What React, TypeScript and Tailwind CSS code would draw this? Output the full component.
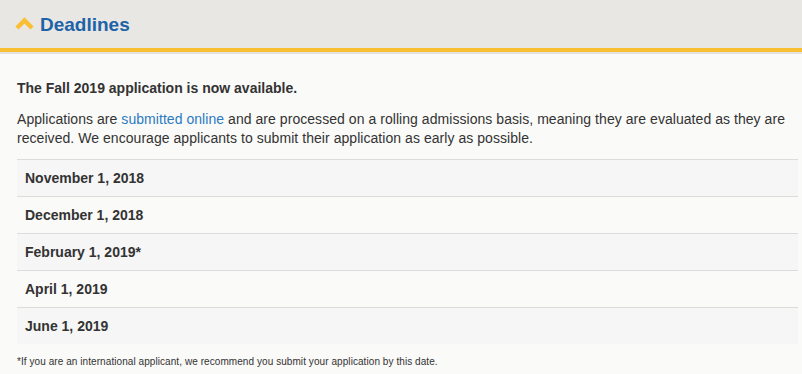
const deadlines = [
  'November 1, 2018',
  'December 1, 2018',
  'February 1, 2019*',
  'April 1, 2019',
  'June 1, 2019',
];

export default function App() {
  return (
    <div className="min-h-[374px] bg-[#fafaf8] text-[#333] font-['Liberation_Sans',Arial,sans-serif]">
      <div className="h-[54px] bg-[#e2e2e0] pb-[2px]">
        <div className="h-[52px] bg-[#e9e7e3] border-b-4 border-[#f9bf33] flex items-center pl-[14px] gap-[5px]">
          <svg width="21" height="13" viewBox="0 0 21 13" className="-mt-[1px]">
            <path d="M3 11 L10.5 3.5 L18 11" fill="none" stroke="#f9bf33" strokeWidth="4.5" strokeLinejoin="miter" />
          </svg>
          <h2 className="text-[19px] font-bold text-[#1c63a8] leading-none">Deadlines</h2>
        </div>
      </div>
      <div className="pl-[17px] pr-[4px]">
        <p className="mt-[26px] text-[14px] font-bold leading-[17px]">The Fall 2019 application is now available.</p>
        <p className="mt-[13px] text-[14px] leading-[19px] pr-[10px] tracking-[0.05px]">
          Applications are <a className="text-[#2a7ac2]">submitted online</a> and are processed on a rolling admissions basis, meaning they are evaluated as they are received. We encourage applicants to submit their application as early as possible.
        </p>
        <div className="mt-[11px]">
          {deadlines.map((d, i) => (
            <div
              key={d}
              className={`h-[37px] border-t border-[#dcdcdc] flex items-center px-[8px] text-[14px] font-bold ${i % 2 === 0 ? 'bg-[#f6f6f6]' : 'bg-[#fafaf8]'}`}
            >
              {d}
            </div>
          ))}
        </div>
        <p className="mt-[12px] text-[10px] leading-[12px] tracking-[0.07px]">*If you are an international applicant, we recommend you submit your application by this date.</p>
      </div>
    </div>
  );
}
